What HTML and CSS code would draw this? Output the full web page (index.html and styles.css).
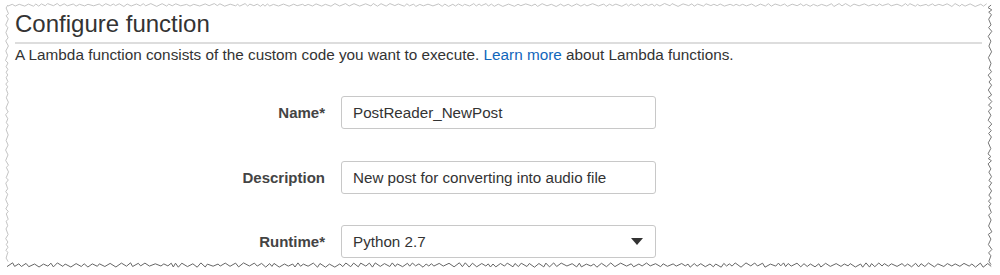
FILE: index.html
```html
<!DOCTYPE html>
<html lang="en">
<head>
    <meta charset="UTF-8">
    <title>Configure function</title>
    <link rel="stylesheet" href="styles.css">
</head>
<body>
    <div class="sheet">
        <h2 class="title">Configure function</h2>
        <p class="intro">A Lambda function consists of the custom code you want to execute. <a href="#" class="link">Learn more</a> about Lambda functions.</p>
        <div class="form">
            <label class="label" for="fn-name">Name*</label>
            <input class="field" id="fn-name" type="text" value="PostReader_NewPost">

            <label class="label" for="fn-desc">Description</label>
            <input class="field" id="fn-desc" type="text" value="New post for converting into audio file">

            <label class="label" for="fn-runtime">Runtime*</label>
            <div class="select" id="fn-runtime">
                <span>Python 2.7</span>
                <span class="caret"></span>
            </div>
        </div>
    </div>
    <svg class="torn" id="torn" width="1000" height="275"></svg>
    <script src="script.js"></script>
</body>
</html>
```

FILE: styles.css
```css
html, body {
    margin: 0;
    background: #fff;
}
body {
    font-family: "Liberation Sans", Arial, sans-serif;
    color: #333;
    width: 1000px;
    height: 275px;
    overflow: hidden;
    position: relative;
}
.sheet {
    padding: 8px 18px 0 15px;
}
.title {
    margin: 0;
    font-size: 24px;
    font-weight: normal;
    line-height: 32px;
    padding-bottom: 2px;
    border-bottom: 2px solid #ddd;
    color: #333;
}
.intro {
    margin: 1px 0 0;
    font-size: 15.3px;
    line-height: 20px;
}
.link {
    color: #1166bb;
    text-decoration: none;
}
.form {
    display: grid;
    grid-template-columns: 310px 315px;
    column-gap: 16px;
    row-gap: 31.5px;
    margin-top: 31px;
    align-items: center;
}
.label {
    text-align: right;
    font-weight: bold;
    font-size: 15px;
    color: #444;
}
.field, .select {
    box-sizing: border-box;
    height: 33px;
    width: 315px;
    border: 1px solid #c8c8c8;
    border-radius: 3px;
    padding: 0 11px;
    font-family: inherit;
    font-size: 15.2px;
    color: #333;
    background: #fff;
    margin: 0;
}
.select {
    display: flex;
    align-items: center;
    justify-content: space-between;
}
.caret {
    width: 0;
    height: 0;
    border-left: 6px solid transparent;
    border-right: 6px solid transparent;
    border-top: 7px solid #333;
    margin-right: 1px;
}
.torn {
    position: absolute;
    left: 0;
    top: 0;
    pointer-events: none;
}
```

FILE: script.js
```js
// draws the ragged "torn paper" frame around the screenshot
var svg = document.getElementById("torn");
var seed = 7;
function rnd() {
    seed = (seed * 9301 + 49297) % 233280;
    return seed / 233280;
}

function edge(x1, y1, x2, y2, horizontal, amp, color) {
    var pts = [];
    var len = horizontal ? x2 - x1 : y2 - y1;
    var pos = 0;
    var flip = 1;
    while (pos <= len) {
        var off = flip * amp * (0.4 + rnd() * 0.6);
        flip = -flip;
        if (horizontal) pts.push((x1 + pos) + "," + (y1 + off).toFixed(1));
        else pts.push((x1 + off).toFixed(1) + "," + (y1 + pos));
        pos += 2 + rnd() * 4;
    }
    var line = document.createElementNS("http://www.w3.org/2000/svg", "polyline");
    line.setAttribute("points", pts.join(" "));
    line.setAttribute("fill", "none");
    line.setAttribute("stroke", color);
    line.setAttribute("stroke-width", "1");
    svg.appendChild(line);
}

edge(8, 5, 990, 5, true, 1.5, "#c4c4c4");
edge(7, 5, 7, 265, false, 1.5, "#c4c4c4");
edge(990, 5, 990, 265, false, 2, "#777");
edge(7, 265, 992, 265, true, 2.2, "#666");
```
